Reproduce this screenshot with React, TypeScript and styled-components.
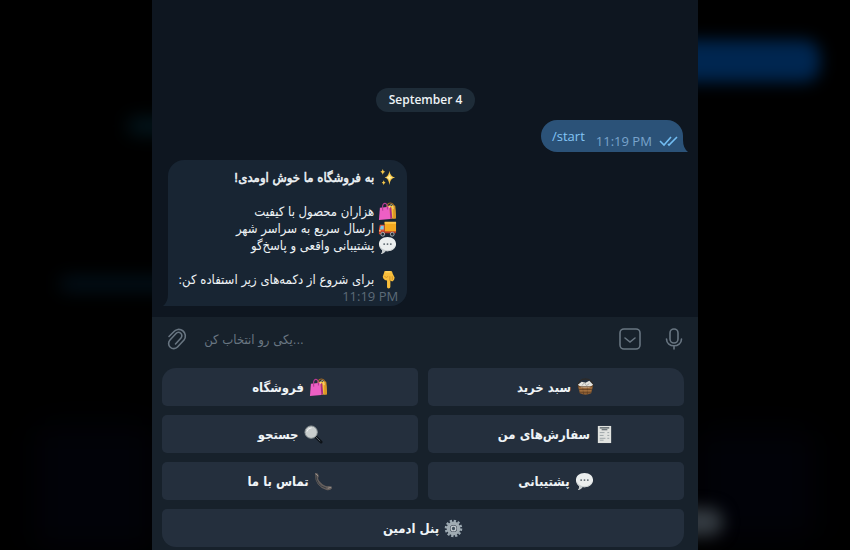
import React from "react";
import styled, { createGlobalStyle } from "styled-components";

const persian = `"DejaVu Sans Condensed", "DejaVu Sans", sans-serif`;

const GlobalStyle = createGlobalStyle`
  *, *::before, *::after { box-sizing: border-box; }
  body {
    margin: 0;
    background: #000;
    font-family: "Open Sans", "DejaVu Sans", sans-serif;
    color: #eef3f6;
  }
  button, input { font: inherit; color: inherit; }
`;

const Page = styled.div`
  position: relative;
  display: flex;
  justify-content: center;
  min-height: 100vh;
  overflow: hidden;
`;

const Glow = styled.div<{ $x: string; $y: string; $w: string; $h: string; $color: string; $blur: number }>`
  position: absolute;
  left: ${(p) => p.$x};
  top: ${(p) => p.$y};
  width: ${(p) => p.$w};
  height: ${(p) => p.$h};
  border-radius: 16px;
  background: ${(p) => p.$color};
  filter: blur(${(p) => p.$blur}px);
`;

const Panel = styled.main`
  position: relative;
  display: flex;
  flex-direction: column;
  width: 64.2%;
  background: #17212b;
`;

const Messages = styled.section`
  flex: 1;
  display: flex;
  flex-direction: column;
  justify-content: flex-end;
  gap: 8px;
  padding: 16px 15px 11px 16px;
  background: #0e1620;
`;

const DatePill = styled.time`
  align-self: center;
  padding: 0 13px;
  border-radius: 12px;
  background: #1e2c38;
  font-size: 12px;
  font-weight: 600;
  line-height: 24px;
`;

const Outgoing = styled.article`
  position: relative;
  align-self: flex-end;
  display: flex;
  gap: 11px;
  padding: 0 4px 0 11px;
  border-radius: 16px 16px 0 16px;
  background: #2b5278;
  font-size: 13px;
  line-height: 32px;
`;

const Command = styled.a`
  color: #83c5f5;
  text-decoration: none;
`;

const SentMeta = styled.span`
  display: flex;
  gap: 7px;
  padding-top: 5px;
  color: #79a4cc;
  line-height: 32px;
  height: 32px;
`;

const Tail = styled.svg<{ $side: "left" | "right" }>`
  position: absolute;
  bottom: 0;
  ${(p) => p.$side}: -5px;
  width: 6px;
  height: 12px;
  transform: ${(p) => (p.$side === "left" ? "scaleX(-1)" : "none")};
`;

const Incoming = styled.article`
  position: relative;
  align-self: flex-start;
  padding: 9px 9px 1px 10px;
  border-radius: 16px 16px 16px 0;
  background: #182533;
  font-size: 13px;
  line-height: 17px;
`;

const Line = styled.p<{ $bold?: boolean; $gap?: boolean }>`
  display: flex;
  align-items: center;
  gap: 4px;
  margin: 0 0 ${(p) => (p.$gap ? "17px" : "0")};
  padding-right: 1px;
  height: 17px;
  font-family: ${persian};
  -webkit-text-stroke: ${(p) => (p.$bold ? "0.5px currentColor" : "0")};
  white-space: nowrap;
`;

const ReceivedTime = styled.time`
  display: block;
  text-align: right;
  color: #5d6b78;
  font-size: 13px;
  line-height: 17px;
`;

const Composer = styled.form`
  display: flex;
  align-items: center;
  height: 51px;
  padding: 0 13px 7px 14px;
`;

const IconButton = styled.button`
  display: grid;
  place-items: center;
  width: 22px;
  height: 24px;
  padding: 0;
  border: 0;
  background: none;
  color: #687581;
  cursor: pointer;
`;

const Field = styled.input`
  flex: 1;
  min-width: 0;
  margin: 0 16px;
  padding: 0;
  border: 0;
  outline: 0;
  background: none;
  font-family: ${persian};
  font-size: 13px;
  &::placeholder { color: #697682; opacity: 1; }
`;

const Actions = styled.div`
  display: flex;
  gap: 22px;
`;

const Keyboard = styled.div`
  display: grid;
  grid-template-columns: 1fr 1fr;
  gap: 9px 10px;
  padding: 0 14px 3px 10px;
`;

const Key = styled.button`
  display: flex;
  align-items: center;
  justify-content: center;
  gap: 5px;
  height: 38px;
  padding: 0;
  border: 0;
  border-radius: 5px;
  background: #242f3d;
  font-family: ${persian};
  font-size: 13px;
  font-weight: 700;
  cursor: pointer;
  &:first-child { border-top-left-radius: 14px; }
  &:nth-child(2) { border-top-right-radius: 14px; }
  &:last-child {
    grid-column: 1 / -1;
    border-radius: 5px 5px 14px 14px;
  }
`;

const Emoji = styled.svg`
  flex: none;
  width: 19px;
  height: 19px;
`;

type GlyphName = "sparkles" | "bags" | "truck" | "speech" | "point" | "basket" | "search" | "receipt" | "phone" | "gear";

const glyphs: Record<GlyphName, React.ReactNode> = {
  sparkles: (
    <g fill="#f7c84a">
      <path d="M12 3q.6 6 6 7-5.400 1-6 8-.6-7-5-8 4.400-1 5-7Z" />
      <path d="M5 1q.4 2.500 2.500 3-2.100.5-2.500 3-.4-2.500-2.500-3Q4.600 3.500 5 1ZM6 13q.3 2 2 2.500-1.700.5-2 2.500-.3-2-2-2.500 1.700-.5 2-2.500Z" />
      <path d="M12 7q.5 2.500 3 3-2.500.5-3 3-.5-2.500-3-3 2.500-.5 3-3Z" fill="#fff0a6" />
    </g>
  ),
  bags: (
    <g>
      <path d="M10 7q-1-6 3-6t4 6" fill="none" stroke="#a66b20" strokeWidth="1.200" />
      <path d="m9 4 9 0 1 13-8 1Z" fill="#f4bd36" />
      <path d="m16 4 2 0 1 13-3 .5Z" fill="#d99524" />
      <path d="m2 6 10-1 1 13-12 1Z" fill="#ed5fc4" />
      <path d="m12 5 2 1 1 11-2 1Z" fill="#a72d83" />
      <path d="M5 9q-1-7 2-7.500T10 8" fill="none" stroke="#b73a93" strokeWidth="1.200" />
      <path d="M12 6.500q0-4 2-4t2 5" fill="none" stroke="#fff0aa" strokeWidth=".7" />
    </g>
  ),
  truck: (
    <g>
      <path d="M7 3h12v11H7Z" fill="#f5a91f" />
      <path d="M7 3h12v2H7Z" fill="#ffc84a" />
      <path d="M2 6h5v10H1v-5Z" fill="#e65332" />
      <path d="M3 7h3v4H2Z" fill="#79cef0" />
      <path d="M1 13h18v2H1Z" fill="#b43b28" />
      <g fill="#292d33" stroke="#aab2b8">
        <circle cx="5" cy="16" r="2" /><circle cx="15" cy="16" r="2" />
      </g>
      <path d="M1 12h2v1H1Z" fill="#ffeaa0" />
    </g>
  ),
  speech: (
    <g>
      <path d="M10 1c5.500 0 9 3.200 9 7.500S15.500 16 10 16l-2-.2Q6 19 3 19q2-2 1.500-4C2.300 13.700 1 11.300 1 8.500 1 4.200 4.500 1 10 1Z" fill="#ebeeee" />
      <path d="M2 10q2 5 8 5t8-5q-1 6-8 6l-2-.2Q6 19 3 19q2-2 1.500-4Q2 13.500 2 10Z" fill="#c5cbcd" />
      <g fill="#59636a"><circle cx="6.500" cy="8.500" r="1" /><circle cx="10" cy="8.500" r="1" /><circle cx="13.500" cy="8.500" r="1" /></g>
    </g>
  ),
  point: (
    <g>
      <path d="M7 1h7q1 0 1.500 3l2 4q0 3-2.500 4l-2-1v7q0 1.500-1.800 1.500T9.500 18v-7Q6 11 5 7Z" fill="#f8be3b" />
      <path d="M12.500 7v4M15 7v3M7 7q2 2 3.500 0" fill="none" stroke="#c58422" strokeWidth=".8" strokeLinecap="round" />
      <path d="M8 2h5" fill="none" stroke="#ffe07b" />
    </g>
  ),
  basket: (
    <g>
      <path d="M2 8Q3 1 10 1t8 7" fill="none" stroke="#33291f" strokeWidth="1" />
      <path d="m2 8 2 8q6 3 12 0l2-8Z" fill="#8d5e32" />
      <path d="m2 7 4-3 4 1 4-2 4 4-4 3H6Z" fill="#e5e4df" />
      <path d="m6 8 3-3 2 3 3-2" fill="none" stroke="#a9aaa7" />
      <path d="M2 9h16M3 12h14M4 15h12M7 10l1 7M12 10v7" fill="none" stroke="#5d3e23" strokeWidth=".7" />
      <path d="M3 10.500h14M4 13.500h12" stroke="#bd8650" strokeWidth=".7" />
    </g>
  ),
  search: (
    <g>
      <path d="m12 12 6 6" stroke="#0c1116" strokeWidth="3" strokeLinecap="round" />
      <path d="m12 12 5 5" stroke="#56616a" strokeWidth="1" />
      <circle cx="7.500" cy="7.500" r="6.500" fill="#c8cdcd" stroke="#8a9295" />
      <path d="M3 7q1-4 5-4" fill="none" stroke="#f2f4f3" />
    </g>
  ),
  receipt: (
    <g>
      <path d="M3 1h14v18H3Z" fill="#e0e2df" />
      <path d="M5 3h10M7 5h6" stroke="#4b565c" strokeWidth="1.200" />
      <path d="M5 8h5M5 11h4M5 14h6M5 16h4M13 8h2M13 11h2M13 14h2" stroke="#8b9498" strokeWidth=".8" />
    </g>
  ),
  phone: (
    <g>
      <path d="M2 1q3 0 3 4-2 2 2 6t7 4q4-1 5 2-2 3-6 2Q1 15 1 3q0-2 1-2Z" fill="#655f5d" />
      <path d="M2 3q0 11 11 14" fill="none" stroke="#393d42" />
      <path d="m2 2 2 2M15 17l3-1" stroke="#9b918b" strokeLinecap="round" />
    </g>
  ),
  gear: (
    <g>
      <circle cx="10" cy="10" r="8" fill="none" stroke="#9daab3" strokeWidth="2.500" strokeDasharray="2.400 1.789" />
      <circle cx="10" cy="10" r="5.500" fill="none" stroke="#a1acb3" strokeWidth="3.500" />
      <circle cx="10" cy="10" r="2.500" fill="#42515d" stroke="#c4cbd0" strokeWidth="1.500" />
    </g>
  ),
};

const Glyph = ({ name }: { name: GlyphName }) => (
  <Emoji viewBox="0 0 20 20" aria-hidden="true">{glyphs[name]}</Emoji>
);

const BubbleTail = ({ side, color }: { side: "left" | "right"; color: string }) => (
  <Tail $side={side} viewBox="0 0 6 12" aria-hidden="true">
    <path d="M0 0h1q0 8 5 12H0Z" fill={color} />
  </Tail>
);

const keys: { label: string; glyph: GlyphName }[] = [
  { label: "فروشگاه", glyph: "bags" },
  { label: "سبد خرید", glyph: "basket" },
  { label: "جستجو", glyph: "search" },
  { label: "سفارش‌های من", glyph: "receipt" },
  { label: "تماس با ما", glyph: "phone" },
  { label: "پشتیبانی", glyph: "speech" },
  { label: "پنل ادمین", glyph: "gear" },
];

const lines: { text: string; glyph: GlyphName; bold?: boolean; gap?: boolean }[] = [
  { text: "به فروشگاه ما خوش اومدی!", glyph: "sparkles", bold: true, gap: true },
  { text: "هزاران محصول با کیفیت", glyph: "bags" },
  { text: "ارسال سریع به سراسر شهر", glyph: "truck" },
  { text: "پشتیبانی واقعی و پاسخ‌گو", glyph: "speech", gap: true },
  { text: "برای شروع از دکمه‌های زیر استفاده کن:", glyph: "point" },
];

export default function App() {
  return (
    <>
      <GlobalStyle />
      <Page>
        <Glow $x="76%" $y="40px" $w="20.5%" $h="42px" $color="#002650" $blur={8} />
        <Glow $x="15%" $y="118px" $w="8%" $h="16px" $color="#031820" $blur={9} />
        <Glow $x="7%" $y="278px" $w="14%" $h="12px" $color="#031420" $blur={9} />
        <Glow $x="4%" $y="425px" $w="14%" $h="125px" $color="#010208" $blur={16} />
        <Glow $x="82%" $y="430px" $w="14%" $h="110px" $color="#010208" $blur={16} />
        <Glow $x="79%" $y="508px" $w="6%" $h="28px" $color="#343b42" $blur={8} />
        <Panel>
          <Messages>
            <DatePill>September 4</DatePill>
            <Outgoing>
              <Command href="#start">/start</Command>
              <SentMeta>
                <time>11:19 PM</time>
                <svg width="20" height="32" viewBox="0 0 20 32" fill="none" stroke="#72bdf2" strokeWidth="1.600" aria-label="Read">
                  <path d="m1 16 4 4 7-8M9 19l1 1 8-8" />
                </svg>
              </SentMeta>
              <BubbleTail side="right" color="#2b5278" />
            </Outgoing>
            <Incoming>
              {lines.map((line) => (
                <Line key={line.text} dir="rtl" $bold={line.bold} $gap={line.gap}>
                  <Glyph name={line.glyph} />
                  <span>{line.text}</span>
                </Line>
              ))}
              <ReceivedTime>11:19 PM</ReceivedTime>
              <BubbleTail side="left" color="#182533" />
            </Incoming>
          </Messages>
          <Composer onSubmit={(e) => e.preventDefault()}>
            <IconButton type="button" aria-label="Attach">
              <svg width="22" height="24" viewBox="0 0 22 24" fill="none" stroke="currentColor" strokeWidth="1.600" strokeLinecap="round">
                <path d="M3 9.500 7.500 5A6.500 6.500 0 0 1 18 13l-6.500 7A5 5 0 0 1 4 13l6-6.500a3.300 3.300 0 0 1 5 4.500l-5.500 6" />
              </svg>
            </IconButton>
            <Field aria-label="Message" placeholder="یکی رو انتخاب کن..." />
            <Actions>
              <IconButton type="button" aria-label="Hide keyboard">
                <svg width="22" height="24" viewBox="0 0 22 24" fill="none" stroke="currentColor" strokeWidth="1.600" strokeLinecap="round">
                  <rect x="1" y="2" width="20" height="20" rx="4" />
                  <path d="m6 11 5 4 5-4" />
                </svg>
              </IconButton>
              <IconButton type="button" aria-label="Record voice">
                <svg width="22" height="24" viewBox="0 0 22 24" fill="none" stroke="currentColor" strokeWidth="1.600" strokeLinecap="round">
                  <rect x="7" y="2" width="8" height="14" rx="4" />
                  <path d="M3.500 12c0 9 15 9 15 0M11 19v3" />
                </svg>
              </IconButton>
            </Actions>
          </Composer>
          <Keyboard>
            {keys.map((key) => (
              <Key key={key.label} type="button" dir="rtl">
                <Glyph name={key.glyph} />
                <span>{key.label}</span>
              </Key>
            ))}
          </Keyboard>
        </Panel>
      </Page>
    </>
  );
}
